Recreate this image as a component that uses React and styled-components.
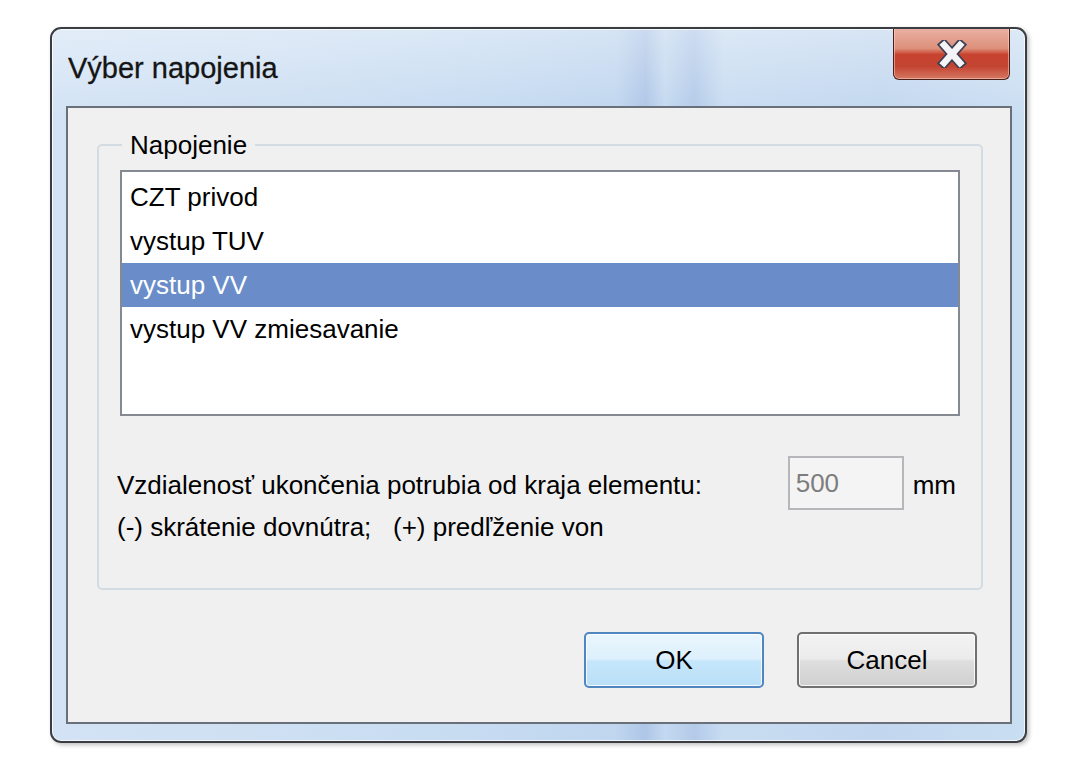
import React, { useState } from 'react'
import styled, { createGlobalStyle } from 'styled-components'

const GlobalStyle = createGlobalStyle`
  html, body {
    margin: 0;
    padding: 0;
    background: #ffffff;
  }
  body {
    font-family: "Liberation Sans", Arial, sans-serif;
  }
`

const Page = styled.div`
  width: 1066px;
  height: 768px;
  padding: 27px 0 0 50px;
  box-sizing: border-box;
`

const Window = styled.div`
  width: 977px;
  height: 716px;
  box-sizing: border-box;
  border: 2px solid #3a3d42;
  border-radius: 11px;
  display: flex;
  flex-direction: column;
  box-shadow: inset 0 0 0 1px rgba(255, 255, 255, 0.75), 2px 2px 4px rgba(0, 0, 0, 0.25);
  background:
    linear-gradient(180deg, rgba(255, 255, 255, 0.35) 0%, rgba(255, 255, 255, 0) 12%),
    linear-gradient(90deg,
      #d3e3f5 0%,
      #cfe0f3 20%,
      #c6dbf1 45%,
      #c0d6ef 58%,
      #aec6e7 61%,
      #c4d9f0 63%,
      #b3cae9 66%,
      #c8dcf1 69%,
      #c2d7ef 85%,
      #cadef2 100%);
  overflow: hidden;
`

const TitleBar = styled.div`
  height: 77px;
  display: flex;
  align-items: center;
  justify-content: space-between;
  padding: 0 15px 0 16px;
  flex-shrink: 0;
`

const Title = styled.div`
  font-size: 29px;
  color: #151515;
  margin-top: 2px;
  -webkit-text-stroke: 0.3px #151515;
`

const CloseButton = styled.button`
  align-self: flex-start;
  margin-top: -1px;
  width: 117px;
  height: 52px;
  padding: 0;
  border: 1px solid #4a1f18;
  border-top: none;
  border-radius: 0 0 6px 6px;
  display: flex;
  align-items: center;
  justify-content: center;
  background: linear-gradient(180deg,
    #eab1a4 0%,
    #dd907c 40%,
    #c8432f 52%,
    #c34431 75%,
    #d57862 100%);
  box-shadow: inset 0 0 0 1px rgba(255, 220, 210, 0.5);
  cursor: pointer;
`

const Client = styled.div`
  flex: 1;
  margin: 0 13px 17px 14px;
  border: 2px solid #6a7079;
  background: #f0f0f0;
  padding: 23px 27px 34px 29px;
  display: flex;
  flex-direction: column;
  font-size: 26px;
  color: #000;
`

const Group = styled.fieldset`
  margin: 0;
  padding: 11px 21px 40px 21px;
  border: 2px solid #d3dce3;
  border-radius: 5px;
  min-width: 0;
`

const Legend = styled.legend`
  padding: 0 8px;
  margin-left: 2px;
  font-size: 26px;
  line-height: 28px;
`

const List = styled.div`
  height: 246px;
  box-sizing: border-box;
  border: 2px solid #858a92;
  background: #ffffff;
  padding-top: 3px;
`

const Item = styled.div`
  height: 44px;
  line-height: 44px;
  padding-left: 8px;
  font-size: 26px;
  background: ${(p) => (p.$selected ? '#6a8dca' : 'transparent')};
  color: ${(p) => (p.$selected ? '#ffffff' : '#000000')};
  cursor: default;
`

const Row = styled.div`
  margin-top: 40px;
  display: flex;
  align-items: flex-start;
`

const TextColumn = styled.div`
  flex: 1;
  margin-top: 8px;
  margin-left: -3px;
  line-height: 42px;
`

const Line = styled.div`
  white-space: pre;
`

const Field = styled.input`
  width: 116px;
  height: 54px;
  box-sizing: border-box;
  border: 2px solid #b5b7bb;
  background: #f4f4f4;
  color: #7d7d7d;
  font-family: "Liberation Sans", Arial, sans-serif;
  font-size: 26px;
  padding: 0 6px;
  outline: none;
`

const Unit = styled.span`
  margin: 8px 4px 0 9px;
  line-height: 42px;
`

const ButtonRow = styled.div`
  margin-top: 42px;
  display: flex;
  justify-content: flex-end;
  gap: 33px;
  padding-right: 6px;
`

const Button = styled.button`
  width: 180px;
  height: 56px;
  box-sizing: border-box;
  border-radius: 5px;
  font-family: "Liberation Sans", Arial, sans-serif;
  font-size: 26px;
  color: #000;
  cursor: pointer;
  border: 2px solid ${(p) => (p.$primary ? '#4f85c0' : '#707070')};
  background: ${(p) =>
    p.$primary
      ? 'linear-gradient(180deg, #eaf6fd 0%, #dcf0fc 48%, #c6e6fb 52%, #b9dff7 100%)'
      : 'linear-gradient(180deg, #f3f3f3 0%, #ebebeb 48%, #dedede 52%, #d0d0d0 100%)'};
  box-shadow: inset 0 0 0 1px rgba(255, 255, 255, 0.8);
`

const items = ['CZT privod', 'vystup TUV', 'vystup VV', 'vystup VV zmiesavanie']

const CloseIcon = () => (
  <svg width="32" height="28" viewBox="0 0 32 28">
    <path d="M8 5 L24 23 M24 5 L8 23" stroke="#3d3f52" strokeWidth="10" strokeLinecap="square" fill="none" />
    <path d="M8 5 L24 23 M24 5 L8 23" stroke="#f4f4f6" strokeWidth="6.5" strokeLinecap="square" fill="none" />
  </svg>
)

const App = () => {
  const [selected, setSelected] = useState(2)
  const [value, setValue] = useState('500')

  return (
    <Page>
      <GlobalStyle />
      <Window>
        <TitleBar>
          <Title>Výber napojenia</Title>
          <CloseButton aria-label="Close">
            <CloseIcon />
          </CloseButton>
        </TitleBar>
        <Client>
          <Group>
            <Legend>Napojenie</Legend>
            <List>
              {items.map((item, i) => (
                <Item key={item} $selected={i === selected} onClick={() => setSelected(i)}>
                  {item}
                </Item>
              ))}
            </List>
            <Row>
              <TextColumn>
                <Line>Vzdialenosť ukončenia potrubia od kraja elementu:</Line>
                <Line>{'(-) skrátenie dovnútra;   (+) predľženie von'}</Line>
              </TextColumn>
              <Field value={value} onChange={(e) => setValue(e.target.value)} />
              <Unit>mm</Unit>
            </Row>
          </Group>
          <ButtonRow>
            <Button $primary>OK</Button>
            <Button>Cancel</Button>
          </ButtonRow>
        </Client>
      </Window>
    </Page>
  )
}

export default App
